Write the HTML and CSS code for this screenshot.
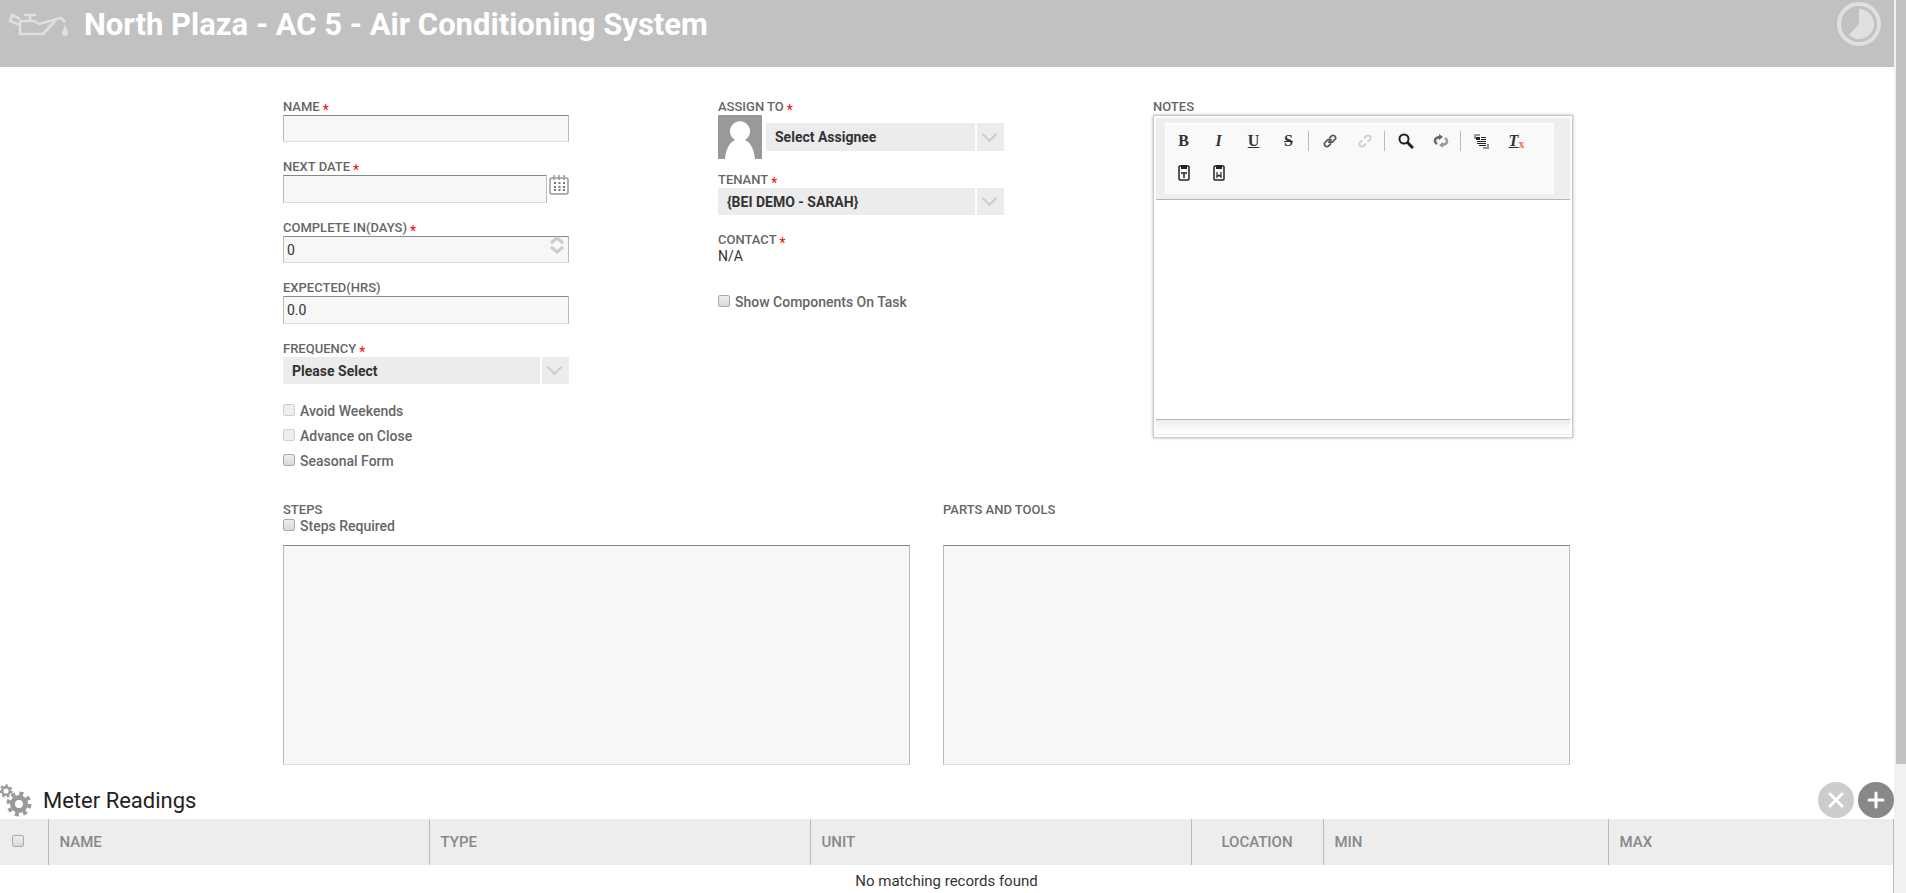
FILE: index.html
```html
<!DOCTYPE html>
<html lang="en">
<head>
    <meta charset="UTF-8">
    <meta name="viewport" content="width=device-width, initial-scale=1.0">
    <title>North Plaza - AC 5 - Air Conditioning System</title>
    <link rel="stylesheet" href="styles.css">
</head>
<body>
<div class="page">
    <header class="page-header">
        <svg class="oil-icon" width="62" height="26" viewBox="0 0 62 26" fill="none" stroke="#e0e0e0" stroke-width="2.6" stroke-linejoin="round">
            <path d="M12 9v13h23L47 9M12 9h14l5 3 22-6 4 4M12 7L4 3 2 9l10 4M16 3h12M22 3v5"/>
            <path d="M57 13c2 4 3 6 3 8a3 3 0 0 1-6 0c0-2 2-4 3-8z" fill="#e0e0e0" stroke="none"/>
        </svg>
        <h1>North Plaza - AC 5 - Air Conditioning System</h1>
        <svg class="clock-icon" width="44" height="44" viewBox="0 0 44 44">
            <circle cx="22" cy="22" r="20" fill="none" stroke="#e0e0e0" stroke-width="4"/>
            <path d="M22 22V7a15 15 0 1 1-10 26z" fill="#e0e0e0"/>
        </svg>
    </header>

    <form class="task-form">
        <div class="columns">
            <div class="column">
                <div class="field">
                    <label for="name">NAME<span class="required">*</span></label>
                    <input class="text" type="text" id="name">
                </div>
                <div class="field">
                    <label for="nextDate">NEXT DATE<span class="required">*</span></label>
                    <div class="date-row">
                        <input class="text tall" type="text" id="nextDate">
                        <button type="button" class="calendar" aria-label="Pick a date">
                            <svg width="20" height="20" viewBox="0 0 20 20" fill="none" stroke="#999">
                                <rect x="1" y="3" width="18" height="16" rx="2" stroke-width="1.5"/>
                                <path d="M5 0v5M10 0v5M15 0v5" stroke-width="1.5"/>
                                <path d="M5 8h11M5 12h11M5 15h11" stroke="#777" stroke-width="2" stroke-dasharray="2 2.5"/>
                            </svg>
                        </button>
                    </div>
                </div>
                <div class="field">
                    <label for="completeIn">COMPLETE IN(DAYS)<span class="required">*</span></label>
                    <div class="spinner">
                        <input class="text" type="text" id="completeIn" value="0">
                        <svg width="14" height="18" viewBox="0 0 14 18" fill="none" stroke="#ccc" stroke-width="3">
                            <path d="M1 7l6-5 6 5M1 11l6 5 6-5"/>
                        </svg>
                    </div>
                </div>
                <div class="field">
                    <label for="expected">EXPECTED(HRS)</label>
                    <input class="text tall" type="text" id="expected" value="0.0">
                </div>
                <div class="field">
                    <label for="frequency">FREQUENCY<span class="required">*</span></label>
                    <div class="select-box">
                        <select id="frequency"><option>Please Select</option></select>
                    </div>
                </div>
                <div class="checks">
                    <label class="check"><input type="checkbox" disabled>Avoid Weekends</label>
                    <label class="check"><input type="checkbox" disabled>Advance on Close</label>
                    <label class="check"><input type="checkbox">Seasonal Form</label>
                </div>
            </div>

            <div class="column">
                <div class="field assign">
                    <label for="assignee">ASSIGN TO<span class="required">*</span></label>
                    <div class="assign-row">
                        <svg width="44" height="44" viewBox="0 0 44 44">
                            <rect width="44" height="44" fill="#999"/>
                            <path d="M7 44c1-10 4-16 10-19a10 10 0 1 1 10 0c6 3 9 9 10 19z" fill="#fff"/>
                        </svg>
                        <div class="select-box tall">
                            <select id="assignee"><option>Select Assignee</option></select>
                        </div>
                    </div>
                </div>
                <div class="field">
                    <label for="tenant">TENANT<span class="required">*</span></label>
                    <div class="select-box">
                        <select id="tenant"><option>{BEI DEMO - SARAH}</option></select>
                    </div>
                </div>
                <div class="field contact">
                    <div class="label">CONTACT<span class="required">*</span></div>
                    <div class="value">N/A</div>
                </div>
                <label class="check wide"><input type="checkbox">Show Components On Task</label>
            </div>

            <div class="column">
                <label for="notes">NOTES</label>
                <div class="editor">
                    <div class="editor-top">
                        <div class="toolbar">
                            <button type="button"><b>B</b></button>
                            <button type="button"><b><i>I</i></b></button>
                            <button type="button"><b><u>U</u></b></button>
                            <button type="button"><b><s>S</s></b></button>
                            <span class="separator"></span>
                            <button type="button" aria-label="Link">
                                <svg width="14" height="14" viewBox="0 0 16 16" fill="none" stroke="#555" stroke-width="2">
                                    <path d="M7 5l3-3q2-1 3 0l1 1q1 2 0 3l-3 3q-2 1-4 0M9 11l-3 3q-2 1-3 0l-1-1q-1-2 0-3l3-3q2-1 4 0M6 10l4-4"/>
                                </svg>
                            </button>
                            <button type="button" aria-label="Unlink" disabled>
                                <svg width="14" height="14" viewBox="0 0 16 16" fill="none" stroke="#ccc" stroke-width="2">
                                    <path d="M7 5l3-3q2-1 3 0l1 1q1 2 0 3l-3 3M9 11l-3 3q-2 1-3 0l-1-1q-1-2 0-3l3-3"/>
                                </svg>
                            </button>
                            <span class="separator"></span>
                            <button type="button" aria-label="Find">
                                <svg width="16" height="16" viewBox="0 0 16 16" fill="none" stroke="#222">
                                    <circle cx="6" cy="6" r="4.5" stroke-width="2"/>
                                    <path d="M9 9l6 6" stroke-width="3"/>
                                </svg>
                            </button>
                            <button type="button" aria-label="Replace">
                                <svg width="16" height="14" viewBox="0 0 16 14" fill="none" stroke-width="2.4">
                                    <path d="M4 10C0 7 2 3 8 3" stroke="#666"/>
                                    <path d="M6 0l4 3-4 3z" fill="#666"/>
                                    <path d="M12 4c4 3 2 7-4 7" stroke="#999"/>
                                    <path d="M10 8l-4 3 4 3z" fill="#999"/>
                                </svg>
                            </button>
                            <span class="separator"></span>
                            <button type="button" aria-label="Select All">
                                <svg width="15" height="15" viewBox="0 0 15 15" fill="none">
                                    <path d="M1 5V1h5M14 10v4H9" stroke="#999" stroke-width="2"/>
                                    <path d="M2 3h4v3H2z" fill="#222"/>
                                    <path d="M7 3.5h5M7 5.500h5M3 7.500h9M3 9.500h9M5 11.500h7" stroke="#222"/>
                                </svg>
                            </button>
                            <button type="button" class="clear-format"><i>T</i><sub>x</sub></button>
                            <button type="button" aria-label="Paste as plain text">
                                <svg width="12" height="16" viewBox="0 0 12 16" fill="none" stroke="#222">
                                    <rect x="1" y="1" width="10" height="14" rx="1" stroke-width="1.5"/>
                                    <path d="M3 0h6v4H3z" fill="#222" stroke="none"/>
                                    <path d="M3 8h6M6 8v5" stroke-width="1.5"/>
                                </svg>
                            </button>
                            <button type="button" aria-label="Paste from Word">
                                <svg width="12" height="16" viewBox="0 0 12 16" fill="none" stroke="#222">
                                    <rect x="1" y="1" width="10" height="14" rx="1" stroke-width="1.5"/>
                                    <path d="M3 0h6v4H3z" fill="#222" stroke="none"/>
                                    <path d="M4 7v5l2-2 2 2V7" stroke-width="1.2"/>
                                </svg>
                            </button>
                        </div>
                    </div>
                    <textarea id="notes"></textarea>
                    <div class="editor-bottom"></div>
                </div>
            </div>
        </div>

        <div class="areas">
            <div class="area">
                <label for="steps">STEPS</label>
                <div class="area-option">
                    <label class="check"><input type="checkbox">Steps Required</label>
                </div>
                <textarea id="steps"></textarea>
            </div>
            <div class="area">
                <label for="parts">PARTS AND TOOLS</label>
                <div class="area-option"></div>
                <textarea id="parts"></textarea>
            </div>
        </div>
    </form>

    <section class="readings">
        <div class="readings-header">
            <svg width="33" height="36" viewBox="0 0 33 36" fill="none" stroke="#999">
                <circle cx="19" cy="22" r="6.500" stroke-width="5"/>
                <circle cx="19" cy="22" r="10.500" stroke-width="4" stroke-dasharray="4 4.246"/>
                <circle cx="6" cy="9" r="3.800" stroke-width="2.400"/>
                <circle cx="6" cy="9" r="5.500" stroke-width="2.400" stroke-dasharray="2.400 2.537"/>
            </svg>
            <h2>Meter Readings</h2>
            <button type="button" class="round disabled" aria-label="Remove" disabled>
                <svg width="16" height="16" viewBox="0 0 16 16" stroke="#fff" stroke-width="3" stroke-linecap="round"><path d="M2 2l12 12M14 2L2 14"/></svg>
            </button>
            <button type="button" class="round" aria-label="Add">
                <svg width="18" height="18" viewBox="0 0 18 18" stroke="#fff" stroke-width="3" stroke-linecap="round"><path d="M9 2v14M2 9h14"/></svg>
            </button>
        </div>
        <table>
            <thead>
                <tr>
                    <th class="col-check"><input type="checkbox" aria-label="Select all"></th>
                    <th class="col-wide">NAME</th>
                    <th class="col-wide">TYPE</th>
                    <th class="col-wide">UNIT</th>
                    <th class="col-location">LOCATION</th>
                    <th class="col-min">MIN</th>
                    <th>MAX</th>
                </tr>
            </thead>
            <tbody>
                <tr>
                    <td colspan="7">No matching records found</td>
                </tr>
            </tbody>
        </table>
    </section>
</div>
<div class="scrollbar"><div class="thumb"></div></div>
</body>
</html>
```
FILE: styles.css
```css
* {
    box-sizing: border-box;
}
body {
    margin: 0;
    display: flex;
    height: 100vh;
    overflow: hidden;
    background-color: #fff;
    color: #333;
    font-family: Roboto, sans-serif;
    font-size: 14px;
}
svg {
    display: block;
    flex: none;
}
button {
    padding: 0;
    border: 0;
    background: none;
    cursor: pointer;
}

/* Header */
.page {
    flex: 1;
    min-width: 0;
}
.page-header {
    display: flex;
    align-items: flex-start;
    height: 67px;
    padding: 2px 13px 0 8px;
    background-color: #c1c1c1;
}
.oil-icon {
    margin-top: 10px;
}
.page-header h1 {
    flex: 1;
    margin: 4px 0 0 14px;
    color: #fff;
    font-size: 31px;
    line-height: 38px;
}

/* Form */
.task-form {
    padding: 32px 321px 0 283px;
}
.columns {
    display: grid;
    grid-template-columns: 286fr 286fr 420fr;
    column-gap: 149px;
}
.task-form label,
.label {
    display: block;
    height: 16px;
    color: #666;
    font-size: 13px;
    font-weight: 500;
    line-height: 16px;
}
.required {
    margin-left: 3px;
    color: #f00;
    font-size: 14px;
    font-weight: normal;
    line-height: 0;
    vertical-align: -4px;
}
.field {
    margin-bottom: 17px;
}
.text {
    display: block;
    width: 100%;
    height: 27px;
    padding: 0 3px;
    border: 1px solid #bbb;
    border-top-color: #888;
    border-bottom-color: #ddd;
    background-color: #f7f7f7;
    color: #333;
    font-family: inherit;
    font-size: 14px;
}
.text.tall {
    height: 28px;
}
.date-row {
    display: flex;
    align-items: flex-start;
    gap: 2px;
}
.spinner,
.select-box {
    display: grid;
    align-items: center;
}
.spinner > *,
.select-box > *,
.select-box::after {
    grid-area: 1 / 1;
}
.spinner svg {
    justify-self: end;
    align-self: start;
    margin-right: 5px;
}
.select-box select {
    width: 100%;
    height: 27px;
    padding: 0 36px 0 9px;
    border: 0;
    border-radius: 0;
    appearance: none;
    background: linear-gradient(#fff, #fff) right 27px top / 2px 100% no-repeat #ececec;
    color: #333;
    font-family: inherit;
    font-size: 14px;
    font-weight: bold;
}
.select-box.tall select {
    height: 28px;
}
.select-box::after {
    content: '';
    justify-self: end;
    width: 9px;
    height: 9px;
    margin: 0 9px 6px 0;
    border: solid #ccc;
    border-width: 0 2px 2px 0;
    transform: rotate(45deg);
    pointer-events: none;
}
.assign {
    margin-bottom: 13px;
}
.assign-row {
    display: flex;
    align-items: center;
    gap: 4px;
}
.assign-row .select-box {
    flex: 1;
}
.value {
    line-height: 16px;
}

/* Checkboxes */
.task-form .check {
    display: flex;
    align-items: center;
    gap: 5px;
    font-size: 14px;
}
.task-form .check.wide {
    margin-top: 30px;
}
.checks {
    display: grid;
    gap: 9px;
    padding-top: 2px;
}
input[type="checkbox"] {
    flex: none;
    width: 12px;
    height: 12px;
    margin: 0;
    border: 1px solid #aaa;
    border-radius: 2px;
    appearance: none;
    background: linear-gradient(#eee, #d8d8d8);
}
input[type="checkbox"]:disabled {
    border-color: #d0d0d0;
    background: #eee;
}
.check input[type="checkbox"] {
    margin-bottom: 3px;
}

/* Notes editor */
.editor {
    height: 323px;
    padding: 2px;
    display: flex;
    flex-direction: column;
    border: 1px solid #ccc;
    box-shadow: 0 0 3px rgba(0, 0, 0, .3);
}
.editor-top {
    padding: 5px 16px 5px 9px;
    border-bottom: 1px solid #b6b6b6;
    background-color: #eee;
}
.toolbar {
    display: flex;
    flex-wrap: wrap;
    padding: 1px 0 4px;
    border: 1px solid #fff;
    background-color: #f9f9f9;
}
.toolbar button {
    display: flex;
    align-items: center;
    justify-content: center;
    width: 35px;
    height: 32px;
    color: #333;
    font-family: "Liberation Serif", serif;
    font-size: 16px;
}
.separator {
    width: 1px;
    height: 20px;
    margin: 6px 3px 0 2px;
    background-color: #bbb;
}
.toolbar .clear-format i {
    font-weight: bold;
    text-decoration: underline;
}
.clear-format sub {
    padding-top: 6px;
    color: #f64;
    font-size: 12px;
    font-weight: bold;
    line-height: 12px;
}
.editor textarea {
    flex: 1;
    border: 0;
    outline: 0;
    resize: none;
}
.editor-bottom {
    height: 16px;
    border-top: 1px solid #b6b6b6;
    border-bottom: 1px solid #eee;
    background: linear-gradient(#eee, #fff);
}

/* Steps and parts */
.areas {
    display: grid;
    grid-template-columns: 1fr 1fr;
    gap: 33px;
    padding: 32px 3px 0 0;
}
.areas,
.columns {
    align-items: start;
}
.columns {
    min-height: 371px;
}
.area-option {
    height: 27px;
}
.area textarea {
    display: block;
    width: 100%;
    height: 220px;
    border: 1px solid #bbb;
    border-top-color: #888;
    border-bottom-color: #ddd;
    background-color: #f7f7f7;
    resize: none;
}

/* Meter readings */
.readings-header {
    display: flex;
    align-items: center;
    gap: 4px;
    padding-top: 16px;
    height: 54px;
}
.readings-header h2 {
    flex: 1;
    margin: 0 0 0 6px;
    color: #222;
    font-size: 22px;
    font-weight: normal;
}
.round {
    display: flex;
    align-items: center;
    justify-content: center;
    width: 36px;
    height: 36px;
    border-radius: 50%;
    background-color: #888;
}
.round.disabled {
    background-color: #ccc;
}
table {
    width: 100%;
    border-collapse: collapse;
    table-layout: fixed;
    border-right: 1px solid #bbb;
}
th {
    height: 46px;
    padding: 0 11px;
    border-right: 1px solid #bbb;
    background-color: #ededed;
    color: #888;
    font-size: 15px;
    font-weight: 500;
    text-align: left;
}
th.col-check {
    width: 48px;
    padding-left: 12px;
}
.col-wide {
    width: 381px;
}
th.col-location {
    width: 132px;
    text-align: center;
}
.col-min {
    width: 285px;
}
td {
    height: 32px;
    padding: 0;
    font-size: 15px;
    text-align: center;
}

/* Scrollbar */
.scrollbar {
    width: 12px;
    padding-left: 2px;
    background-color: #f1f1f1;
}
.thumb {
    height: 764px;
    background-color: #c1c1c1;
}
```
